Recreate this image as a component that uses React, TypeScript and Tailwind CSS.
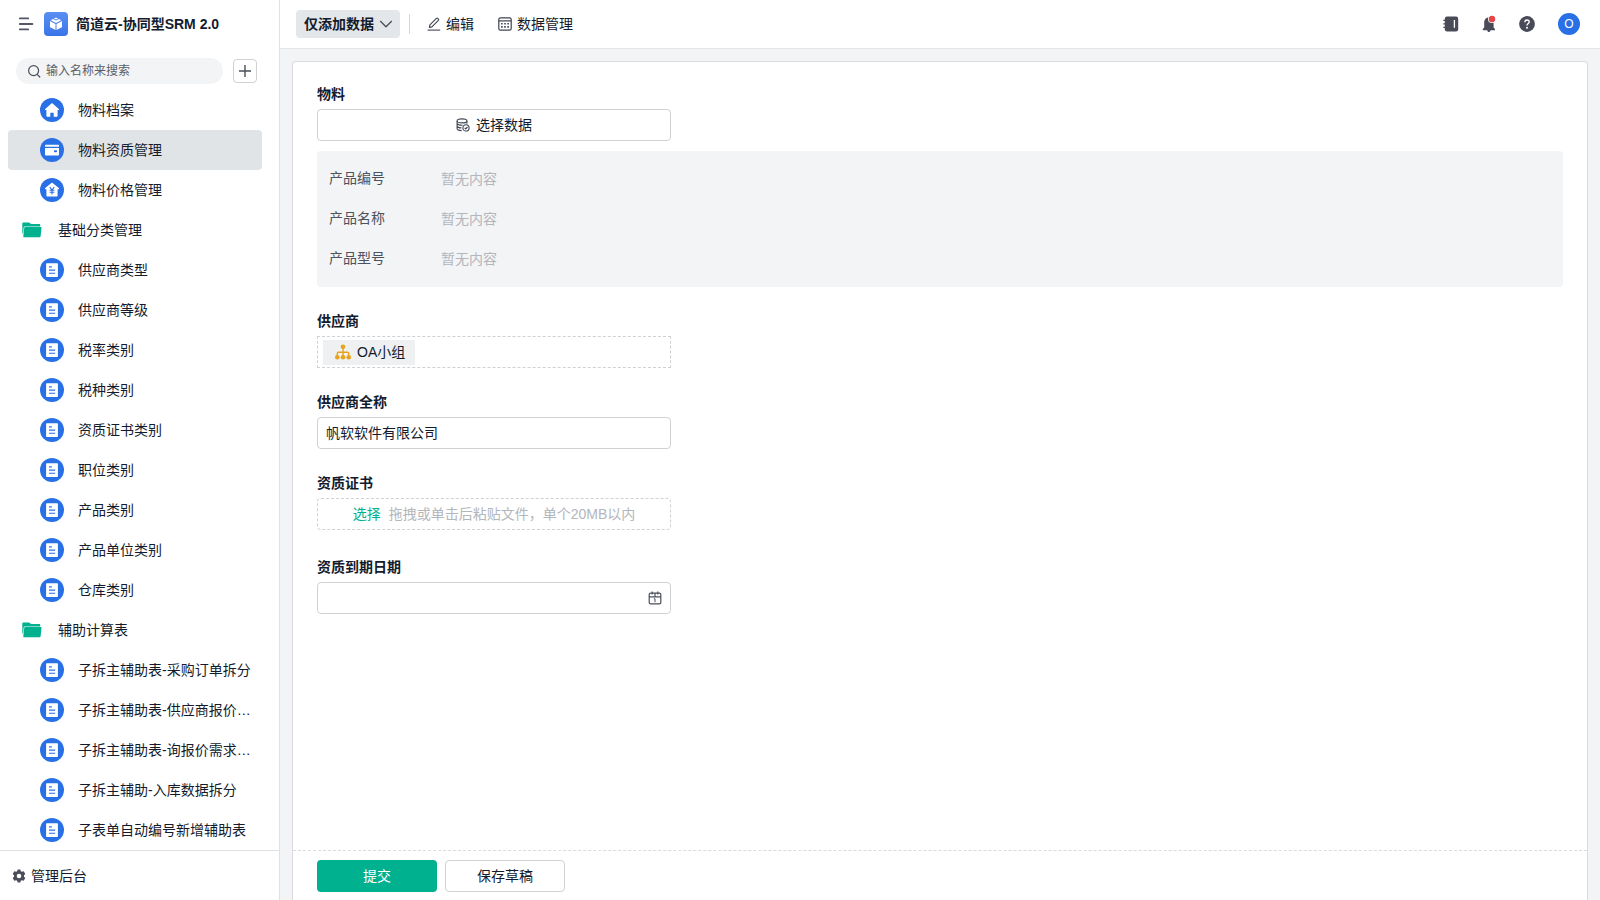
import { useState } from 'react';

type MenuItem = {
  id: number;
  label: string;
  icon: 'home' | 'card' | 'price' | 'doc' | 'folder';
};

const menuItems: MenuItem[] = [
  { id: 1, label: '物料档案', icon: 'home' },
  { id: 2, label: '物料资质管理', icon: 'card' },
  { id: 3, label: '物料价格管理', icon: 'price' },
  { id: 4, label: '基础分类管理', icon: 'folder' },
  { id: 5, label: '供应商类型', icon: 'doc' },
  { id: 6, label: '供应商等级', icon: 'doc' },
  { id: 7, label: '税率类别', icon: 'doc' },
  { id: 8, label: '税种类别', icon: 'doc' },
  { id: 9, label: '资质证书类别', icon: 'doc' },
  { id: 10, label: '职位类别', icon: 'doc' },
  { id: 11, label: '产品类别', icon: 'doc' },
  { id: 12, label: '产品单位类别', icon: 'doc' },
  { id: 13, label: '仓库类别', icon: 'doc' },
  { id: 14, label: '辅助计算表', icon: 'folder' },
  { id: 15, label: '子拆主辅助表-采购订单拆分', icon: 'doc' },
  { id: 16, label: '子拆主辅助表-供应商报价…', icon: 'doc' },
  { id: 17, label: '子拆主辅助表-询报价需求…', icon: 'doc' },
  { id: 18, label: '子拆主辅助-入库数据拆分', icon: 'doc' },
  { id: 19, label: '子表单自动编号新增辅助表', icon: 'doc' },
];

const productFields = ['产品编号', '产品名称', '产品型号'];

function FolderIcon() {
  return (
    <svg width="20" height="16" viewBox="0 0 20 16" className="shrink-0">
      <path d="M0.3 1.6C0.3 1 0.7 0.5 1.3 0.5H7.2L9 2H17.2C17.8 2 18.2 2.4 18.2 3V4.5H3.2C2.3 4.5 1.7 4.9 1.6 5.7L1 12.4L0.3 10Z" fill="#00b18f" />
      <path d="M3.3 5.1H18.8C19.3 5.1 19.6 5.5 19.5 6L18.6 14.2C18.5 14.9 18 15.3 17.4 15.3H2.2C1.6 15.3 1.2 14.9 1.3 14.3L2.2 6C2.3 5.4 2.7 5.1 3.3 5.1Z" fill="#00b18f" />
    </svg>
  );
}

function ItemIcon({ icon }: { icon: MenuItem['icon'] }) {
  return (
    <svg width="24" height="24" viewBox="0 0 24 24" className="shrink-0">
      <circle cx="12" cy="12" r="12" fill="#2970e6" />
      {icon === 'home' && (
        <path
          d="M11.4 5.5C11.8 5.2 12.2 5.2 12.6 5.5L18.8 10.9C19.3 11.4 19.1 12 18.5 12H17.6V18C17.6 18.5 17.3 18.8 16.8 18.8H13.7V14.8H10.3V18.8H7.2C6.7 18.8 6.4 18.5 6.4 18V12H5.5C4.9 12 4.7 11.4 5.2 10.9Z"
          fill="#fff"
        />
      )}
      {icon === 'card' && (
        <>
          <path d="M5 8.8V7.8C5 7.2 5.5 6.8 6.1 6.8H17.9C18.5 6.8 19 7.2 19 7.8V8.8Z" fill="#fff" />
          <path d="M5 10H19V16.4C19 17 18.5 17.4 17.9 17.4H6.1C5.5 17.4 5 17 5 16.4Z" fill="#fff" />
          <rect x="14" y="12.2" width="3" height="2" rx="0.6" fill="#2970e6" />
        </>
      )}
      {icon === 'price' && (
        <>
          <path
            d="M11.4 4.9C11.8 4.6 12.2 4.6 12.6 4.9L18.8 10.1C19.3 10.6 19.1 11.2 18.5 11.2H17.6V17.8C17.6 18.3 17.3 18.6 16.8 18.6H7.2C6.7 18.6 6.4 18.3 6.4 17.8V11.2H5.5C4.9 11.2 4.7 10.6 5.2 10.1Z"
            fill="#fff"
          />
          <path d="M9.8 9.2L12 12L14.2 9.2M12 12V16.6M9.6 12.2H14.4M9.6 14.3H14.4" fill="none" stroke="#2970e6" strokeWidth="1.1" />
        </>
      )}
      {icon === 'doc' && (
        <>
          <rect x="6.1" y="5.2" width="11.8" height="13.8" rx="0.8" fill="#fff" />
          <path d="M9 8.9H11.8M9 12.1H15.2M9 15.3H15.2" stroke="#2970e6" strokeWidth="1.1" />
        </>
      )}
    </svg>
  );
}

function Sidebar() {
  const [activeId, setActiveId] = useState(2);

  return (
    <aside className="w-[280px] shrink-0 flex flex-col bg-white border-r border-[#dfe1e4]">
      {/* App title */}
      <div className="flex items-center h-12 pl-[18px]">
        <button aria-label="收起菜单" className="mr-2.5">
          <svg width="16" height="14" viewBox="0 0 16 14" fill="none" stroke="#545763" strokeWidth="1.8" strokeLinecap="round">
            <path d="M1.8 1.4H10.2M1.8 7H14.4M1.8 12.4H10.2" />
          </svg>
        </button>
        <div className="w-6 h-6 rounded bg-gradient-to-b from-[#5a8ff2] to-[#3a74e8] flex items-center justify-center mr-2">
          <svg width="14" height="14" viewBox="0 0 14 14" fill="#fff">
            <path d="M4.1 1.9L7 3.4L9.9 1.9L12.2 3.2L7 6L1.8 3.2L4.1 1.9Z" />
            <path d="M5 1.4L6.4 0.8C6.8 0.6 7.2 0.6 7.6 0.8L9 1.4L7 2.5Z" />
            <path d="M1 4.1L6.5 7V13L1.6 10.6C1.2 10.4 1 10.1 1 9.7Z" />
            <path d="M13 4.1L7.5 7V13L12.4 10.6C12.8 10.4 13 10.1 13 9.7Z" />
          </svg>
        </div>
        <h1 className="text-sm font-bold">简道云-协同型SRM 2.0</h1>
      </div>

      {/* Search */}
      <div className="flex items-center h-[42px] pt-1 pl-4 pr-[22px]">
        <label className="flex items-center flex-1 h-[26px] rounded-full bg-[#f2f4f5] pl-[11px] mr-2.5">
          <svg width="14" height="14" viewBox="0 0 14 14" fill="none" stroke="#4b4f5a" strokeWidth="1.2" strokeLinecap="round" className="shrink-0">
            <circle cx="6.6" cy="6.6" r="5" />
            <path d="M10.4 10.6L12.8 13" />
          </svg>
          <input
            type="text"
            aria-label="搜索"
            placeholder="输入名称来搜索"
            className="w-full min-w-0 ml-[5px] text-xs bg-transparent outline-none placeholder:text-[#5b5e68]"
          />
        </label>
        <button aria-label="新增" className="w-6 h-6 rounded border border-[#cfd1d5] flex items-center justify-center">
          <svg width="12" height="12" viewBox="0 0 12 12" stroke="#4b4f5a" strokeWidth="1.4">
            <path d="M6 0V12M0 6H12" />
          </svg>
        </button>
      </div>

      {/* Menu */}
      <nav className="flex-1 min-h-0 overflow-hidden pl-2 pr-[17px]">
        {menuItems.map((item) => (
          <button
            key={item.id}
            onClick={() => setActiveId(item.id)}
            className={`w-full h-10 flex items-center rounded text-sm text-left whitespace-nowrap ${
              item.icon === 'folder' ? 'pl-3.5' : 'pl-8'
            } ${item.id === activeId ? 'bg-[#e1e4e7]' : ''}`}
          >
            {item.icon === 'folder' ? <FolderIcon /> : <ItemIcon icon={item.icon} />}
            <span className={item.icon === 'folder' ? 'ml-4' : 'ml-3.5'}>{item.label}</span>
          </button>
        ))}
      </nav>

      {/* Admin link */}
      <div className="h-[50px] shrink-0 border-t border-[#dfe1e4] flex items-center pl-3">
        <a href="#admin" className="flex items-center text-sm">
          <svg width="14" height="14" viewBox="0 0 14 14" className="mr-[5px]">
            <path
              fillRule="evenodd"
              fill="#4b4e5a"
              d="M5.7 0.4H8.3L8.8 2.2L9.9 2.8L11.7 2.3L13.3 4.9L12 6.3V7.7L13.3 9.1L11.7 11.7L9.9 11.2L8.8 11.8L8.3 13.6H5.7L5.2 11.8L4.1 11.2L2.3 11.7L0.7 9.1L2 7.7V6.3L0.7 4.9L2.3 2.3L4.1 2.8L5.2 2.2ZM7 4.7A2.3 2.3 0 1 0 7 9.3A2.3 2.3 0 1 0 7 4.7Z"
            />
          </svg>
          管理后台
        </a>
      </div>
    </aside>
  );
}

function Header() {
  return (
    <header className="h-[49px] shrink-0 flex items-center bg-white border-b border-[#e4e6e9] pl-4 pr-5">
      <button className="h-7 flex items-center rounded bg-[#e4e7ea] pl-2 pr-[7px] text-sm font-semibold">
        仅添加数据
        <svg width="14" height="8" viewBox="0 0 14 8" fill="none" stroke="#4b4f5a" strokeWidth="1.3" className="ml-[5px]">
          <path d="M1.2 1L7 6.8L12.8 1" />
        </svg>
      </button>
      <div className="w-px h-5 bg-[#d4d6da] mx-[9px]"></div>
      <button className="flex items-center text-sm px-2">
        <svg width="14" height="14" viewBox="0 0 14 14" fill="none" stroke="#3f4450" strokeWidth="1.1" strokeLinejoin="round" className="mr-[5px]">
          <path d="M2.4 10.4L2.9 7.9L9.4 1.4C9.8 1 10.3 1 10.7 1.4L11.4 2.1C11.8 2.5 11.8 3 11.4 3.4L4.9 9.9Z" />
          <path d="M0.6 13.1H13.2" />
        </svg>
        编辑
      </button>
      <button className="flex items-center text-sm px-2 ml-2">
        <svg width="14" height="14" viewBox="0 0 14 14" fill="none" stroke="#3f4450" strokeWidth="1.2" className="mr-[5px]">
          <rect x="0.8" y="0.8" width="12.4" height="12.4" rx="1.6" />
          <path d="M0.8 3.9H13.2" />
          <path d="M3.1 6.8H4.7M6.2 6.8H7.8M9.3 6.8H10.9M3.1 9.9H4.7M6.2 9.9H7.8M9.3 9.9H10.9" strokeWidth="1.6" />
        </svg>
        数据管理
      </button>

      <div className="ml-auto flex items-center">
        <button aria-label="通讯录">
          <svg width="16" height="16" viewBox="0 0 16 16">
            <rect x="1.8" y="0.6" width="13.4" height="14.8" rx="2.2" fill="#4a4b59" />
            <path d="M0.3 4.4H3M0.3 7.9H3M0.3 11.4H3" stroke="#4a4b59" strokeWidth="1.2" />
            <path d="M11.4 4V11.8" stroke="#fff" strokeWidth="1.3" />
          </svg>
        </button>
        <button aria-label="消息" className="ml-[23px]">
          <svg width="16" height="18" viewBox="0 0 16 18">
            <path d="M6.6 2.4C10.2 2.4 11.6 4.8 11.6 7.8V12.4L13 14V15.2H8.6C8.4 16.3 7.7 17 6.9 17C6.1 17 5.4 16.3 5.2 15.2H0.8V14L2.2 12.4V7.8C2.2 4.8 3.8 2.4 6.6 2.4Z" fill="#4a4b59" />
            <circle cx="10" cy="4" r="4" fill="#fff" />
            <circle cx="10" cy="4" r="3.2" fill="#e64545" />
          </svg>
        </button>
        <button aria-label="帮助" className="ml-[21px]">
          <svg width="16" height="16" viewBox="0 0 16 16">
            <circle cx="8" cy="8" r="7.9" fill="#4a4b59" />
            <path d="M5.8 6.2C5.8 4.8 6.7 4 8 4C9.3 4 10.2 4.8 10.2 6C10.2 7.5 8 7.6 8 9.6" fill="none" stroke="#fff" strokeWidth="1.4" />
            <circle cx="8" cy="11.8" r="1" fill="#fff" />
          </svg>
        </button>
        <button className="ml-[23px] w-[22px] h-[22px] rounded-full bg-[#2970e6] text-white text-xs">O</button>
      </div>
    </header>
  );
}

export default function App() {
  const [company, setCompany] = useState('帆软软件有限公司');
  const [expireDate, setExpireDate] = useState('');

  return (
    <div className="h-screen flex overflow-hidden bg-[#f2f4f6] text-[#141b2d] font-['Liberation_Sans','Noto_Sans_CJK_SC',sans-serif]">
      <Sidebar />

      <div className="flex-1 min-w-0 flex flex-col">
        <Header />

        <main className="flex-1 min-h-0 flex flex-col mt-3 mx-3 bg-white border border-b-0 border-[#d9dbdf] rounded-t">
          <form className="flex-1 min-h-0 flex flex-col" onSubmit={(e) => e.preventDefault()}>
            <div className="flex-1 min-h-0 overflow-hidden px-6 pt-[21px] flex flex-col gap-[23px] text-sm">
              {/* Material */}
              <div>
                <div id="material" className="mb-1 leading-[22px] font-semibold">物料</div>
                <button
                  type="button"
                  aria-describedby="material"
                  className="w-[354px] max-w-full h-8 rounded border border-[#cfd1d5] flex items-center justify-center"
                >
                  <svg width="14" height="14" viewBox="0 0 14 14" fill="none" stroke="#3f4450" strokeWidth="1.1" className="mr-1.5">
                    <ellipse cx="6" cy="2.9" rx="4.9" ry="2" />
                    <path d="M1.1 2.9V10.6C1.1 11.7 3 12.6 5.6 12.6M10.9 2.9V5.8M1.1 5.6C1.6 6.7 3.4 7.4 6.6 7.3M1.1 8.2C1.6 9.2 3 9.9 5.4 9.9" />
                    <circle cx="10" cy="9.9" r="3.1" />
                    <path d="M8.7 9.9L9.7 10.9L11.5 9" />
                  </svg>
                  选择数据
                </button>
                <dl className="mt-2.5 rounded bg-[#f2f4f6] px-3 pt-[7px] pb-[9px]">
                  {productFields.map((field) => (
                    <div key={field} className="h-10 flex items-center">
                      <dt className="w-28 text-[#4d525d]">{field}</dt>
                      <dd className="pt-px text-[#b3b6bb]">暂无内容</dd>
                    </div>
                  ))}
                </dl>
              </div>

              {/* Supplier */}
              <div>
                <div className="mb-1 leading-[22px] font-semibold">供应商</div>
                <div className="w-[354px] max-w-full h-8 border border-dashed border-[#cfd1d5] flex items-center px-[5px]">
                  <span className="h-[25px] flex items-center bg-[#eff0f1] pl-3 pr-2.5">
                    <svg width="16" height="16" viewBox="0 0 16 16" className="mr-1.5">
                      <g fill="#e8a21c">
                        <circle cx="8" cy="2.8" r="2.3" />
                        <circle cx="2.3" cy="13.2" r="2.3" />
                        <circle cx="8" cy="13.2" r="2.3" />
                        <circle cx="13.7" cy="13.2" r="2.3" />
                      </g>
                      <path d="M8 4V12M2.3 12V9.4C2.3 8.6 2.7 8.2 3.5 8.2H12.5C13.3 8.2 13.7 8.6 13.7 9.4V12" fill="none" stroke="#e8a21c" strokeWidth="1.4" />
                    </svg>
                    OA小组
                  </span>
                </div>
              </div>

              {/* Supplier full name */}
              <div>
                <label htmlFor="company" className="block mb-1 leading-[22px] font-semibold">供应商全称</label>
                <input
                  id="company"
                  type="text"
                  value={company}
                  onChange={(e) => setCompany(e.target.value)}
                  className="block w-[354px] max-w-full h-8 rounded border border-[#cfd1d5] px-2 pb-0.5 outline-none focus:border-[#00b18f]"
                />
              </div>

              {/* Certificate upload */}
              <div className="pb-[3px]">
                <div className="mb-1 leading-[22px] font-semibold">资质证书</div>
                <div className="w-[354px] max-w-full h-8 rounded border border-dashed border-[#cfd1d5] flex items-center justify-center text-[#b3b6bb]">
                  <button type="button" className="mr-2 text-[#00b18f]">选择</button>
                  拖拽或单击后粘贴文件，单个20MB以内
                </div>
              </div>

              {/* Expire date */}
              <div>
                <label htmlFor="expire" className="block mb-1 leading-[22px] font-semibold">资质到期日期</label>
                <div className="w-[354px] max-w-full h-8 rounded border border-[#cfd1d5] flex items-center pr-2">
                  <input
                    id="expire"
                    type="text"
                    value={expireDate}
                    onChange={(e) => setExpireDate(e.target.value)}
                    className="flex-1 min-w-0 h-full px-2 bg-transparent outline-none"
                  />
                  <button type="button" aria-label="选择日期">
                    <svg width="14" height="14" viewBox="0 0 14 14" fill="none" stroke="#4b4f5a" strokeWidth="1.2">
                      <rect x="1.2" y="2.2" width="11.6" height="10.6" rx="1.4" />
                      <path d="M1.2 5.8H12.8M4.2 0.6V3.6M9.8 0.6V3.6M7 2.2V5.8" />
                      <path d="M5.9 7.8H7V11.2" strokeWidth="1" />
                    </svg>
                  </button>
                </div>
              </div>
            </div>

            {/* Actions */}
            <div className="h-[50px] shrink-0 border-t border-dashed border-[#d9dbdf] flex items-center gap-2 px-6 text-sm">
              <button type="submit" className="w-[120px] h-8 rounded bg-[#00b18f] text-white">提交</button>
              <button type="button" className="w-[120px] h-8 rounded border border-[#cfd1d5]">保存草稿</button>
            </div>
          </form>
        </main>
      </div>
    </div>
  );
}
